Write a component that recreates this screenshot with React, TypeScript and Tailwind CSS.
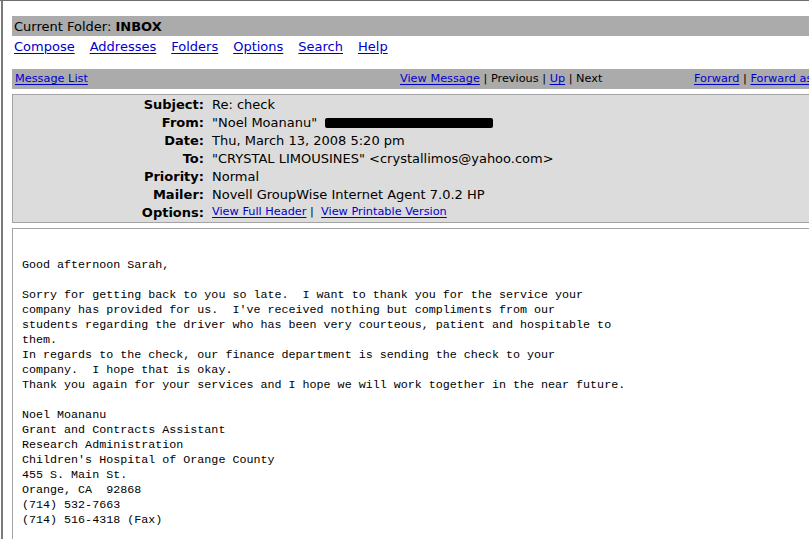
import React from "react";

const verdana = { fontFamily: '"DejaVu Sans", Verdana, sans-serif' };
const mono = { fontFamily: '"Liberation Mono", "Courier New", monospace' };

const navLinks = ["Compose", "Addresses", "Folders", "Options", "Search", "Help"];

const bodyLines = [
  "",
  "Good afternoon Sarah,",
  "",
  "Sorry for getting back to you so late.  I want to thank you for the service your",
  "company has provided for us.  I've received nothing but compliments from our",
  "students regarding the driver who has been very courteous, patient and hospitable to",
  "them.",
  "In regards to the check, our finance department is sending the check to your",
  "company.  I hope that is okay.",
  "Thank you again for your services and I hope we will work together in the near future.",
  "",
  "Noel Moananu",
  "Grant and Contracts Assistant",
  "Research Administration",
  "Children's Hospital of Orange County",
  "455 S. Main St.",
  "Orange, CA  92868",
  "(714) 532-7663",
  "(714) 516-4318 (Fax)",
];

function Link({ children, className = "" }: { children: React.ReactNode; className?: string }) {
  return <a className={`text-[#0000cc] underline underline-offset-[2px] ${className}`}>{children}</a>;
}

function Row({ label, children }: { label: string; children: React.ReactNode }) {
  return (
    <div className="flex h-[18px] items-center">
      <div className="w-[191px] shrink-0 text-right font-bold">{label}</div>
      <div className="pl-[8px] whitespace-nowrap flex items-center">{children}</div>
    </div>
  );
}

export default function App() {
  return (
    <div className="w-[809px] h-[539px] overflow-hidden bg-white text-black" style={verdana}>
      <div className="w-[1000px] h-full border-t border-[#6e6e6e] pl-[1px]">
        <div className="h-full border-l-2 border-[#7a7a7a] pl-[9px] pt-[15px]">
          {/* folder title bar */}
          <div className="h-[20px] bg-[#ababab] flex items-center pl-[2px] text-[13px] leading-none">
            <span>Current Folder:&nbsp;</span>
            <span className="font-bold">INBOX</span>
          </div>

          {/* main menu */}
          <div className="h-[20px] flex items-center gap-[15px] pl-[2px] text-[13px] leading-none">
            {navLinks.map((l) => (
              <Link key={l}>{l}</Link>
            ))}
          </div>

          {/* message navigation bar */}
          <div className="mt-[13px] h-[20px] bg-[#ababab] flex items-center text-[11.3px] leading-none">
            <div className="w-[388px] shrink-0 pl-[3px]">
              <Link>Message List</Link>
            </div>
            <div className="w-[294px] shrink-0 whitespace-nowrap">
              <Link>View Message</Link> | Previous | <Link>Up</Link> | Next
            </div>
            <div className="whitespace-nowrap">
              <Link>Forward</Link> | <Link>Forward as Attachment</Link> | <Link>Reply</Link> |{" "}
              <Link>Reply All</Link>
            </div>
          </div>

          {/* message headers */}
          <div className="mt-[5px] bg-[#dcdcdc] border border-[#a3a3a3] text-[13px] leading-none">
            <Row label="Subject:">Re: check</Row>
            <Row label="From:">
              <span>"Noel Moananu"&nbsp;&nbsp;</span>
              <span className="inline-block w-[168px] h-[10px] bg-black rounded-[2px] mt-[1px]" />
            </Row>
            <Row label="Date:">Thu, March 13, 2008 5:20 pm</Row>
            <Row label="To:">"CRYSTAL LIMOUSINES" &lt;crystallimos@yahoo.com&gt;</Row>
            <Row label="Priority:">Normal</Row>
            <Row label="Mailer:">Novell GroupWise Internet Agent 7.0.2 HP</Row>
            <Row label="Options:">
              <span className="text-[11.3px]">
                <Link>View Full Header</Link>&nbsp;|&nbsp;&nbsp;<Link>View Printable Version</Link>
              </span>
            </Row>
            <div className="h-[1px]" />
          </div>

          {/* message body */}
          <div className="mt-[5px] border border-[#a3a3a3] h-[400px] pt-[14px] pl-[9px]">
            <div className="text-[11.7px] leading-[15px] whitespace-pre" style={mono}>
              {bodyLines.map((line, i) => (
                <div key={i} className="h-[15px]">
                  {line}
                </div>
              ))}
            </div>
          </div>
        </div>
      </div>
    </div>
  );
}
